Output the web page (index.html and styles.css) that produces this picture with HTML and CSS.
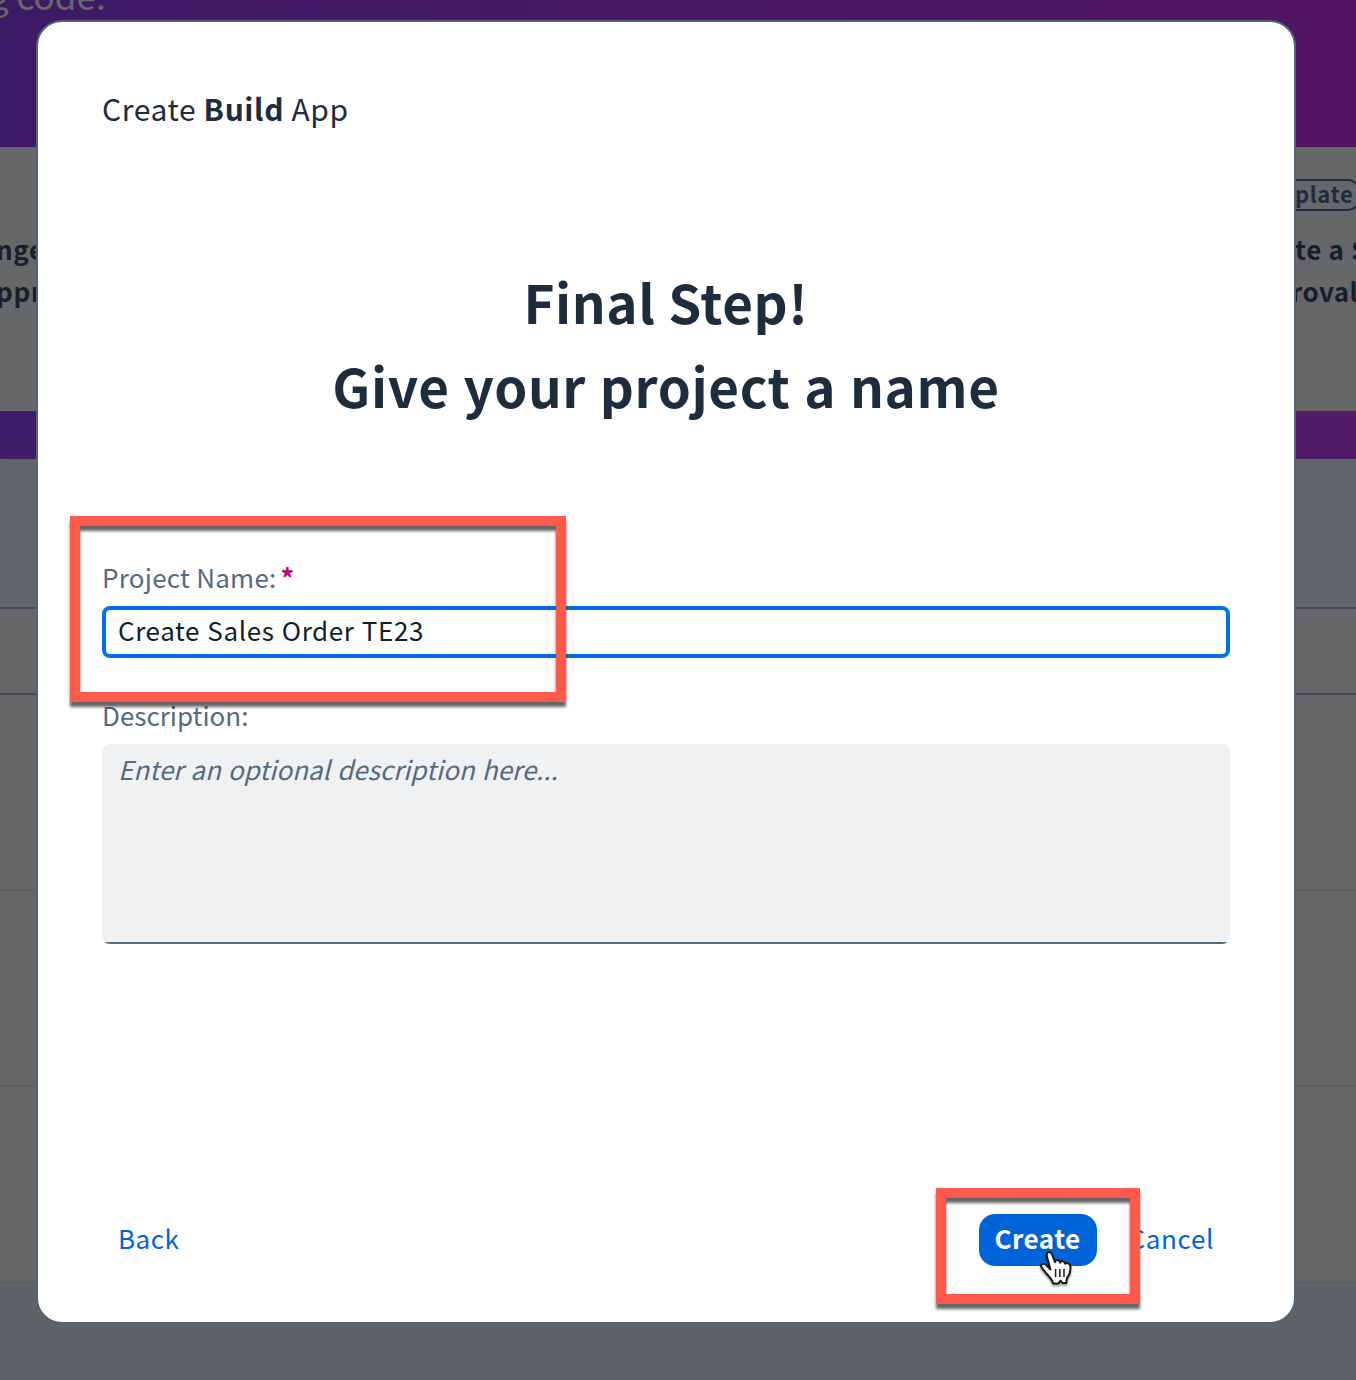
FILE: index.html
```html
<!DOCTYPE html>
<html lang="en">
<head>
<meta charset="utf-8">
<title>Create Build App</title>
<link rel="stylesheet" href="styles.css">
</head>
<body>
<div class="stage">
  <div class="page" aria-hidden="true">
    <div class="hero"><span class="hero-text">g code.</span></div>
    <div class="cards">
      <div class="card card-left">
        <div class="card-title">nge<br>ppr</div>
      </div>
      <div class="card card-right">
        <span class="tag">plate</span>
        <div class="card-title">te a S<br><span class="tight">roval</span></div>
      </div>
    </div>
    <div class="band"></div>
    <div class="toolbar"></div>
    <div class="row head"></div>
    <div class="row"></div>
    <div class="row"></div>
    <div class="row"></div>
    <div class="footer"></div>
  </div>

  <main class="dialog">
    <div class="crumb"><span>Create <b>Build</b> App</span></div>
    <h1 class="title"><span class="t1">Final Step!</span><br><span class="t2">Give your project a name</span></h1>
    <label class="label"><span class="l1">Project Name:</span><span class="req">*</span></label>
    <div class="input"><span>Create Sales Order TE23</span></div>
    <label class="label second"><span class="l2">Description:</span></label>
    <div class="textarea"><span>Enter an optional description here...</span></div>
    <div class="actions">
      <button class="btn back"><span>Back</span></button>
      <button class="btn primary"><span>Create</span></button>
      <button class="btn cancel"><span>Cancel</span></button>
    </div>
  </main>

  <div class="mark mark-name"></div>
  <div class="mark mark-create"></div>
  <svg class="cursor" width="36" height="40" viewBox="0 0 36 40">
    <path d="M11.5 21.500 L8.300 10 C7.200 6.500 8 4.300 10 4.100 C12 4 13 5.500 14 8.800 L16 14.200 C16.300 11.300 20.300 11.200 21.200 14.700 C22 12.300 25.500 12.600 26.200 15.800 C27.500 14.300 31 14.800 31.400 18.500 C31.600 23 30.800 26.500 28.300 29.500 C27.500 30.800 27.400 33 27.300 35 L23.500 35 L21.500 32.500 L19.500 35.500 L14.200 35.500 C13.500 31.500 9.500 28 6.500 24.500 C4.800 22.300 2.200 19.800 2 18 C2 15.600 5 15.200 7.200 17 Z" fill="#fff" stroke="#1a1a1a" stroke-width="2" stroke-linejoin="round"/>
    <path d="M16.600 21v8M20.800 21v8M25 21v8" stroke="#1a1a1a" stroke-width="1.500" fill="none"/>
  </svg>
</div>
</body>
</html>
```
FILE: styles.css
```css
* { box-sizing: border-box; }
body {
  margin: 0;
  font-family: "Noto Sans CJK SC", "Noto Sans", sans-serif;
  font-size: 26px;
  color: #1d2d3e;
}
.stage {
  position: relative;
  display: grid;
  width: 1356px;
  height: 1380px;
  overflow: hidden;
  background: #636567;
}
.page, .dialog { grid-area: 1 / 1; }

.page { display: flex; flex-direction: column; min-width: 0; overflow: hidden; }
.hero {
  height: 147px;
  flex: none;
  overflow: hidden;
  background: linear-gradient(90deg, #3d1a66, #521563);
}
.hero-text {
  display: block;
  margin: -33px 0 0 -11px;
  font-size: 35px;
  line-height: 56px;
  color: #666a67;
}
.cards {
  display: flex;
  justify-content: space-between;
  height: 264px;
  flex: none;
  background: #656768;
}
.card { width: 60px; white-space: nowrap; }
.card-left { padding-top: 81px; }
.card-right { padding-top: 32px; }
.card-title { font-size: 26px; font-weight: 700; line-height: 42px; color: #15202c; letter-spacing: .7px; }
.card-left .card-title { margin-left: -4px; }
.card-right .card-title { margin-left: -1px; padding-top: 17px; }
.tight { margin-left: -4px; letter-spacing: .4px; }
.tag {
  display: block;
  height: 32px;
  margin-left: -20px;
  width: 84px;
  padding-left: 17px;
  border: 2px solid #1d2d3e;
  border-radius: 12px;
  font-size: 22px;
  letter-spacing: .6px;
  font-weight: 700;
  line-height: 25px;
}
.band { height: 48px; flex: none; background: linear-gradient(90deg, #3f1d6b, #521a66); }
.toolbar { height: 150px; flex: none; background: #626567; border-bottom: 2px solid #484b51; }
.row { height: 196px; flex: none; background: #656668; border-bottom: 2px solid #5d5f61; }
.row.head { height: 86px; border-bottom-color: #484b51; }
.footer { flex: 1; background: #606365; }

.dialog {
  z-index: 1;
  display: flex;
  flex-direction: column;
  width: 1260px;
  height: 1304px;
  margin: 20px 0 0 36px;
  padding: 64px 64px 0;
  border: 2px solid #53617d;
  border-radius: 26px;
  background: #fff;
}
.crumb { font-size: 30px; line-height: 44px; letter-spacing: .62px; }
.title {
  margin: 129px 0 0;
  text-align: center;
  font-size: 53px;
  font-weight: 700;
  line-height: 84px;
}
.t1 { letter-spacing: .6px; }
.t2 { letter-spacing: .6px; word-spacing: 1.2px; }
.label {
  display: flex;
  margin-top: 130px;
  height: 40px;
  line-height: 40px;
  color: #556b82;
}
.l1 { letter-spacing: .25px; }
.label.second { margin-top: 38px; }
.req { margin: 1px 0 0 4px; font-size: 27px; font-weight: 700; color: #ba066c; }
.input {
  height: 52px;
  margin-top: 9px;
  padding-left: 12px;
  border: 4px solid #0070f2;
  border-radius: 8px;
  line-height: 39px;
  letter-spacing: .6px;
  word-spacing: .9px;
  color: #131e29;
}
.label.second { margin-top: 37px; }
.textarea {
  height: 200px;
  margin-top: 9px;
  padding: 5px 16px;
  border-radius: 8px;
  background: linear-gradient(#556b82, #556b82) bottom / 100% 2px no-repeat #eff1f2;
  line-height: 40px;
  font-style: italic;
  letter-spacing: .02px;
  word-spacing: 1.2px;
  color: #556b82;
}
.actions { display: flex; align-items: center; margin-top: 270px; }
.btn {
  height: 52px;
  padding: 0 16px;
  border: 0;
  border-radius: 16px;
  background: none;
  font: inherit;
  line-height: 47px;
  letter-spacing: .5px;
  color: #0064d9;
  white-space: nowrap;
}
.btn span { display: block; height: 52px; }
.back { margin-right: auto; }
.primary { width: 118px; padding: 0 15px; margin-right: 16px; background: #0064d9; font-weight: 700; color: #fff; }
.cancel { letter-spacing: .65px; }

.mark {
  position: absolute;
  z-index: 2;
  border: 10px solid #ff5a4c;
  filter: drop-shadow(0 5px 1.500px rgba(0, 0, 0, .6));
}
.mark-name { left: 70px; top: 516px; width: 496px; height: 186px; }
.mark-create { left: 936px; top: 1188px; width: 204px; height: 116px; }
.cursor {
  position: absolute;
  z-index: 3;
  left: 1039px;
  top: 1248px;
  filter: drop-shadow(0 2px 1px rgba(0, 0, 0, .4));
}
```
